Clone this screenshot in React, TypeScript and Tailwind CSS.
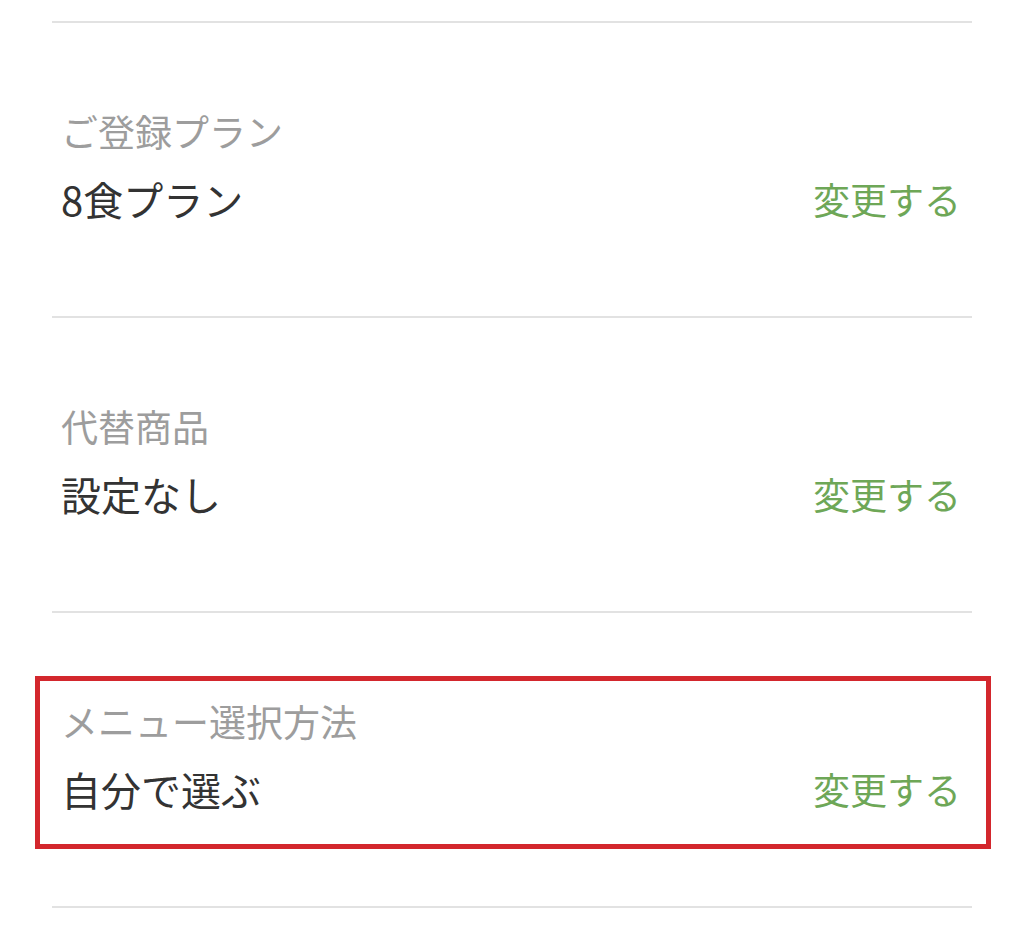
const rows = [
  { label: "ご登録プラン", value: "8食プラン", highlight: false },
  { label: "代替商品", value: "設定なし", highlight: false },
  { label: "メニュー選択方法", value: "自分で選ぶ", highlight: true },
];

function SettingRow({
  label,
  value,
  highlight,
}: {
  label: string;
  value: string;
  highlight: boolean;
}) {
  return (
    <div className="relative border-t-2 border-[#e2e2e2] pt-[84px] pb-[93px] pl-[9px] pr-[11px]">
      {highlight && (
        <div className="pointer-events-none absolute top-[63px] -left-[17px] -right-[19px] h-[173px] border-[5px] border-[#d3272d]" />
      )}
      <p className="text-[37px] leading-[48px] text-[#9d9d9d]">{label}</p>
      <div className="mt-[20px] flex items-center justify-between">
        <p className="text-[40px] leading-[48px] text-[#333333]">{value}</p>
        <button className="text-[37px] leading-[48px] text-[#6ea757]">
          変更する
        </button>
      </div>
    </div>
  );
}

export default function App() {
  return (
    <div
      className="min-h-[939px] bg-white px-[52px] pt-[21px]"
      style={{ fontFamily: '"Noto Sans CJK JP", "Noto Sans", sans-serif' }}
    >
      {rows.map((row) => (
        <SettingRow key={row.label} {...row} />
      ))}
      <div className="border-t-2 border-[#e2e2e2]" />
    </div>
  );
}
